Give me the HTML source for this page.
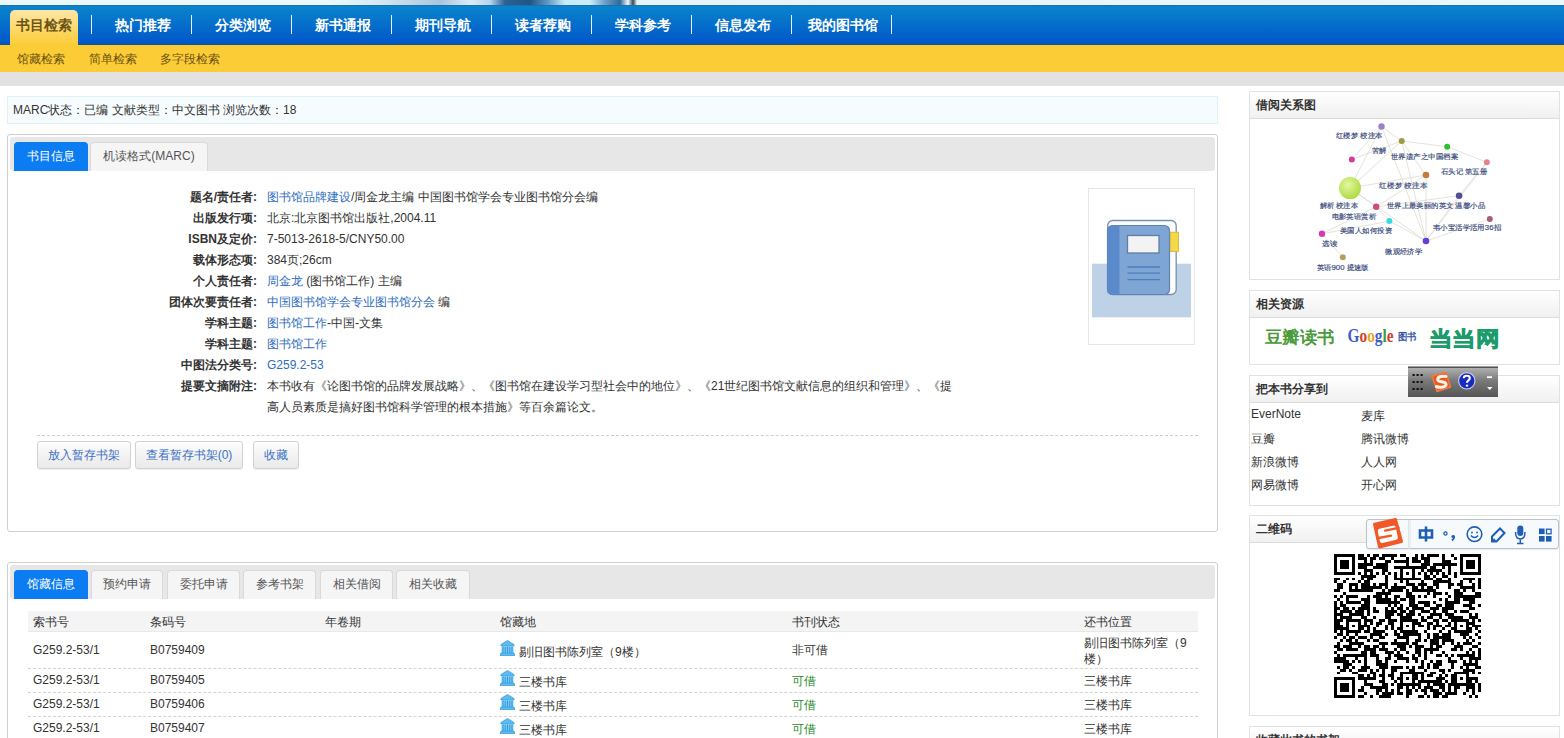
<!DOCTYPE html>
<html><head><meta charset="utf-8">
<style>
*{margin:0;padding:0;box-sizing:border-box}
html,body{width:1564px;height:738px;overflow:hidden;background:#fff;font-family:"Liberation Sans",sans-serif;font-size:12px;color:#333}
.abs{position:absolute}
#banner{left:0;top:0;width:1564px;height:5px;background:linear-gradient(90deg,#eaf8fb 0,#eaf8fb 330px,#d5e8f2 380px,#a9c6dc 440px,#d9ecf6 470px,#b7d6ec 490px,#2a6292 505px,#1f5685 530px,#5f9ac6 548px,#c6ecf8 565px,#c8eef9 590px,#6d9fc6 605px,#2f6a98 620px,#f0f8fc 628px,#3a4a5a 633px,#e6f3f8 637px,#eaf8fb 100%)}
#nav{left:0;top:5px;width:1564px;height:40px;background:linear-gradient(#0a84cc,#0057c9);border-top:1px solid #1a70b0;border-bottom:1px solid #1b4f86}
#nav .it{position:absolute;top:0;height:38px;line-height:38px;color:#fff;font-size:14px;font-weight:bold;white-space:nowrap}
#nav .sep{position:absolute;top:9px;width:1px;height:19px;background:#e8f0ff}
#nav .act{top:4px;left:10px;width:68px;height:35px;line-height:31px;text-align:center;color:#6a5418;background:linear-gradient(#ffe6a6,#fccc36);border-radius:5px 5px 0 0}
#sub{left:0;top:45px;width:1564px;height:27px;background:#fccc36}
#sub span{position:absolute;top:1px;line-height:27px;color:#6a5214;font-size:12px}
#gray{left:0;top:72px;width:1564px;height:14px;background:#e2e2e2}
#marc{left:7px;top:96px;width:1211px;height:28px;background:#f6fcfe;border:1px solid #def3f8;line-height:26px;padding-left:5px;color:#333}
.panel{position:absolute;left:7px;width:1211px;border:1px solid #cfcfcf;border-radius:3px;background:#fff}
.phead{position:absolute;left:2px;top:2px;width:1205px;height:34px;background:#e7e7e7;border-radius:3px}
.tab{position:absolute;top:5px;height:29px;line-height:27px;text-align:center;font-size:12px;color:#555;background:#f5f5f5;border:1px solid #d9d9d9;border-bottom:none;border-radius:4px 4px 0 0}
.tab.on{background:#0b7cf2;color:#fff;border-color:#0b7cf2}
.row{position:absolute;left:0;width:1209px;height:21px;line-height:21px;white-space:nowrap}
.row b{position:absolute;right:960px;font-weight:bold;color:#333}
.row .v{position:absolute;left:259px;color:#333}
a{color:#2f6dbd;text-decoration:none}
.btn{position:absolute;top:306px;height:28px;line-height:26px;text-align:center;color:#3c70c4;border:1px solid #d2d2d2;border-radius:3px;background:linear-gradient(#fdfdfd,#e9e9e9);box-shadow:0 1px 1px rgba(0,0,0,0.07)}
.th{position:absolute;top:0;line-height:20px;color:#333}
.td{position:absolute;color:#333;white-space:nowrap}
.dash{position:absolute;left:20px;width:1170px;height:1px;border-top:1px dashed #d4d4d4}
.lib{display:inline-block;vertical-align:top;margin:0 4px 0 0;position:relative;top:-4px}
.box{position:absolute;left:1249px;width:311px;border:1px solid #e2e2e2;background:#fff}
.bhead{height:27px;line-height:26px;padding-left:6px;font-weight:bold;color:#333;background:linear-gradient(#ffffff,#f0f0f0);border-bottom:1px solid #dcdcdc}
.share{position:absolute;line-height:16px;color:#333}
</style></head><body>
<div id="banner" class="abs"></div>
<div id="nav" class="abs">
 <div class="it act">书目检索</div>
 <div class="sep" style="left:91px"></div>
 <div class="it" style="left:115px">热门推荐</div>
 <div class="sep" style="left:191px"></div>
 <div class="it" style="left:215px">分类浏览</div>
 <div class="sep" style="left:291px"></div>
 <div class="it" style="left:315px">新书通报</div>
 <div class="sep" style="left:391px"></div>
 <div class="it" style="left:415px">期刊导航</div>
 <div class="sep" style="left:491px"></div>
 <div class="it" style="left:515px">读者荐购</div>
 <div class="sep" style="left:591px"></div>
 <div class="it" style="left:615px">学科参考</div>
 <div class="sep" style="left:691px"></div>
 <div class="it" style="left:715px">信息发布</div>
 <div class="sep" style="left:791px"></div>
 <div class="it" style="left:808px">我的图书馆</div>
 <div class="sep" style="left:891px"></div>
</div>
<div id="sub" class="abs">
 <span style="left:17px">馆藏检索</span>
 <span style="left:89px">简单检索</span>
 <span style="left:160px">多字段检索</span>
</div>
<div id="gray" class="abs"></div>
<div id="marc" class="abs">MARC状态：已编 文献类型：中文图书 浏览次数：18</div>

<div class="panel" style="top:134px;height:398px">
 <div class="phead">
  <div class="tab on" style="left:4px;width:74px">书目信息</div>
  <div class="tab" style="left:80px;width:118px">机读格式(MARC)</div>
 </div>
 <div class="row" style="top:52px"><b>题名/责任者:</b><span class="v"><a>图书馆品牌建设</a>/周金龙主编 中国图书馆学会专业图书馆分会编</span></div>
 <div class="row" style="top:73px"><b>出版发行项:</b><span class="v">北京:北京图书馆出版社,2004.11</span></div>
 <div class="row" style="top:94px"><b>ISBN及定价:</b><span class="v">7-5013-2618-5/CNY50.00</span></div>
 <div class="row" style="top:115px"><b>载体形态项:</b><span class="v">384页;26cm</span></div>
 <div class="row" style="top:136px"><b>个人责任者:</b><span class="v"><a>周金龙</a> (图书馆工作) 主编</span></div>
 <div class="row" style="top:157px"><b>团体次要责任者:</b><span class="v"><a>中国图书馆学会专业图书馆分会</a> 编</span></div>
 <div class="row" style="top:178px"><b>学科主题:</b><span class="v"><a>图书馆工作</a>-中国-文集</span></div>
 <div class="row" style="top:199px"><b>学科主题:</b><span class="v"><a>图书馆工作</a></span></div>
 <div class="row" style="top:220px"><b>中图法分类号:</b><span class="v"><a>G259.2-53</a></span></div>
 <div class="row" style="top:241px"><b>提要文摘附注:</b><span class="v">本书收有《论图书馆的品牌发展战略》、《图书馆在建设学习型社会中的地位》、《21世纪图书馆文献信息的组织和管理》、《提</span></div>
 <div class="row" style="top:262px"><span class="v">高人员素质是搞好图书馆科学管理的根本措施》等百余篇论文。</span></div>
 <div class="abs" style="left:29px;top:300px;width:1161px;border-top:1px dashed #cfcfcf"></div>
 <div class="btn" style="left:29px;width:94px">放入暂存书架</div>
 <div class="btn" style="left:127px;width:108px">查看暂存书架(0)</div>
 <div class="btn" style="left:245px;width:46px">收藏</div>
</div>

<div class="panel" style="top:562px;height:200px">
 <div class="phead">
  <div class="tab on" style="left:4px;width:74px">馆藏信息</div>
  <div class="tab" style="left:81px;width:72px">预约申请</div>
  <div class="tab" style="left:157px;width:73px">委托申请</div>
  <div class="tab" style="left:233px;width:73px">参考书架</div>
  <div class="tab" style="left:310px;width:73px">相关借阅</div>
  <div class="tab" style="left:386px;width:74px">相关收藏</div>
 </div>

 <div class="abs" style="left:20px;top:48px;width:1170px;height:21px;background:#f4f4f4;border-bottom:1px solid #e8e8e8"></div>
 <div class="th" style="left:25px;top:49px">索书号</div>
 <div class="th" style="left:142px;top:49px">条码号</div>
 <div class="th" style="left:317px;top:49px">年卷期</div>
 <div class="th" style="left:492px;top:49px">馆藏地</div>
 <div class="th" style="left:784px;top:49px">书刊状态</div>
 <div class="th" style="left:1076px;top:49px">还书位置</div>
 <div class="td" style="left:25px;top:80px">G259.2-53/1</div>
 <div class="td" style="left:142px;top:80px">B0759409</div>
 <div class="td" style="left:492px;top:81px"><svg class="lib" width="15" height="16" viewBox="0 0 15 16"><path d="M7.5 0.5L14 4.5V6H1V4.5Z" fill="#5cbcf2" stroke="#3a9ee0" stroke-width="0.8"/><rect x="1.5" y="6.5" width="12" height="6.5" fill="#7fcdf6"/><path d="M3 6.5V13M5.2 6.5V13M7.5 6.5V13M9.8 6.5V13M12 6.5V13" stroke="#3399dd" stroke-width="1.1"/><path d="M1 13H14L15 15.5H0Z" fill="#5cbcf2" stroke="#3a9ee0" stroke-width="0.8"/></svg>剔旧图书陈列室（9楼）</div>
 <div class="td" style="left:784px;top:79px">非可借</div>
 <div class="td" style="left:1076px;top:72px;line-height:16px">剔旧图书陈列室（9<br>楼）</div>
 <div class="dash" style="top:105px"></div>
 <div class="td" style="left:25px;top:110px">G259.2-53/1</div>
 <div class="td" style="left:142px;top:110px">B0759405</div>
 <div class="td" style="left:492px;top:111px"><svg class="lib" width="15" height="16" viewBox="0 0 15 16"><path d="M7.5 0.5L14 4.5V6H1V4.5Z" fill="#5cbcf2" stroke="#3a9ee0" stroke-width="0.8"/><rect x="1.5" y="6.5" width="12" height="6.5" fill="#7fcdf6"/><path d="M3 6.5V13M5.2 6.5V13M7.5 6.5V13M9.8 6.5V13M12 6.5V13" stroke="#3399dd" stroke-width="1.1"/><path d="M1 13H14L15 15.5H0Z" fill="#5cbcf2" stroke="#3a9ee0" stroke-width="0.8"/></svg>三楼书库</div>
 <div class="td" style="left:784px;top:110px;color:#2b8a2b">可借</div>
 <div class="td" style="left:1076px;top:110px">三楼书库</div>
 <div class="dash" style="top:129px"></div>
 <div class="td" style="left:25px;top:134px">G259.2-53/1</div>
 <div class="td" style="left:142px;top:134px">B0759406</div>
 <div class="td" style="left:492px;top:135px"><svg class="lib" width="15" height="16" viewBox="0 0 15 16"><path d="M7.5 0.5L14 4.5V6H1V4.5Z" fill="#5cbcf2" stroke="#3a9ee0" stroke-width="0.8"/><rect x="1.5" y="6.5" width="12" height="6.5" fill="#7fcdf6"/><path d="M3 6.5V13M5.2 6.5V13M7.5 6.5V13M9.8 6.5V13M12 6.5V13" stroke="#3399dd" stroke-width="1.1"/><path d="M1 13H14L15 15.5H0Z" fill="#5cbcf2" stroke="#3a9ee0" stroke-width="0.8"/></svg>三楼书库</div>
 <div class="td" style="left:784px;top:134px;color:#2b8a2b">可借</div>
 <div class="td" style="left:1076px;top:134px">三楼书库</div>
 <div class="dash" style="top:153px"></div>
 <div class="td" style="left:25px;top:158px">G259.2-53/1</div>
 <div class="td" style="left:142px;top:158px">B0759407</div>
 <div class="td" style="left:492px;top:159px"><svg class="lib" width="15" height="16" viewBox="0 0 15 16"><path d="M7.5 0.5L14 4.5V6H1V4.5Z" fill="#5cbcf2" stroke="#3a9ee0" stroke-width="0.8"/><rect x="1.5" y="6.5" width="12" height="6.5" fill="#7fcdf6"/><path d="M3 6.5V13M5.2 6.5V13M7.5 6.5V13M9.8 6.5V13M12 6.5V13" stroke="#3399dd" stroke-width="1.1"/><path d="M1 13H14L15 15.5H0Z" fill="#5cbcf2" stroke="#3a9ee0" stroke-width="0.8"/></svg>三楼书库</div>
 <div class="td" style="left:784px;top:158px;color:#2b8a2b">可借</div>
 <div class="td" style="left:1076px;top:158px">三楼书库</div>
</div>


<svg class="abs" style="left:1088px;top:188px" width="107" height="157" viewBox="0 0 107 157">
 <rect x="0.5" y="0.5" width="106" height="156" fill="#fff" stroke="#e6e6e6"/>
 <rect x="4" y="75.7" width="99" height="53.6" fill="#bdd1e7"/>
 <rect x="19.7" y="32.5" width="68.5" height="74" rx="5" fill="#fbfcfd" stroke="#7a90aa" stroke-width="1.3"/>
 <rect x="19.5" y="37.5" width="62" height="69" rx="5" fill="#7ea5d4" stroke="#5f84b3" stroke-width="1.2"/>
 <path d="M24.5 37.5H31.4V106.5H24.5A5 5 0 0 1 19.5 101.5V42.5A5 5 0 0 1 24.5 37.5Z" fill="#5a8acb"/>
 <rect x="39.5" y="47.5" width="31.5" height="17.5" fill="#f3f3f3" stroke="#5d7ea6" stroke-width="1.3"/>
 <path d="M39.5 79H72M39.5 85.2H72M39.5 91.6H72" stroke="#4d7ec0" stroke-width="1.3"/>
 <rect x="82.3" y="44.2" width="8.2" height="19.3" fill="#f4d848" stroke="#d0b23a" stroke-width="0.8"/>
</svg>

<div class="box" style="top:91px;height:189px"><div class="bhead">借阅关系图</div></div>
<svg class="abs" style="left:1250px;top:119px" width="309" height="160" viewBox="0 0 309 160">
<defs><radialGradient id="lg" cx="0.4" cy="0.35" r="0.7"><stop offset="0" stop-color="#e4f7a0"/><stop offset="1" stop-color="#a9d93c"/></radialGradient></defs>
<g stroke="#dedbd2" stroke-width="0.8" fill="none">
<line x1="100.0" y1="69.1" x2="131.5" y2="7.5"/>
<line x1="100.0" y1="69.1" x2="151.7" y2="22.0"/>
<line x1="101.8" y1="40.4" x2="151.7" y2="22.0"/>
<line x1="131.5" y1="7.5" x2="151.7" y2="22.0"/>
<line x1="131.5" y1="7.5" x2="176.0" y2="122.0"/>
<line x1="151.7" y1="22.0" x2="176.0" y2="122.0"/>
<line x1="151.7" y1="22.0" x2="197.2" y2="27.7"/>
<line x1="197.2" y1="27.7" x2="236.8" y2="43.3"/>
<line x1="236.8" y1="43.3" x2="209.1" y2="76.7"/>
<line x1="236.8" y1="43.3" x2="176.0" y2="122.0"/>
<line x1="176.0" y1="56.0" x2="176.0" y2="122.0"/>
<line x1="100.0" y1="69.1" x2="176.0" y2="56.0"/>
<line x1="100.0" y1="69.1" x2="126.2" y2="87.8"/>
<line x1="100.0" y1="69.1" x2="176.0" y2="122.0"/>
<line x1="126.2" y1="87.8" x2="139.4" y2="102.1"/>
<line x1="126.2" y1="87.8" x2="176.0" y2="56.0"/>
<line x1="209.1" y1="76.7" x2="176.0" y2="122.0"/>
<line x1="209.1" y1="76.7" x2="126.2" y2="87.8"/>
<line x1="239.8" y1="100.0" x2="176.0" y2="122.0"/>
<line x1="72.0" y1="114.8" x2="126.2" y2="87.8"/>
<line x1="72.0" y1="114.8" x2="139.4" y2="102.1"/>
<line x1="72.0" y1="114.8" x2="92.8" y2="138.2"/>
<line x1="139.4" y1="102.1" x2="176.0" y2="122.0"/>
<line x1="101.8" y1="40.4" x2="131.5" y2="7.5"/>
<line x1="151.7" y1="22.0" x2="176.0" y2="56.0"/>
</g><g font-size="7.4" fill="#3a4a7c" stroke="#3a4a7c" stroke-width="0.18">
<text x="85.8" y="19.1" textLength="46.8" lengthAdjust="spacingAndGlyphs">红楼梦 校注本</text>
<text x="122.0" y="33.7" textLength="14.8" lengthAdjust="spacingAndGlyphs">苦解</text>
<text x="141.0" y="40.0" textLength="67.0" lengthAdjust="spacingAndGlyphs">世界遗产之中国档案</text>
<text x="190.9" y="54.9" textLength="46.3" lengthAdjust="spacingAndGlyphs">石头记 第五册</text>
<text x="129.4" y="68.7" textLength="47.8" lengthAdjust="spacingAndGlyphs">红楼梦 校注本</text>
<text x="69.5" y="88.7" textLength="38.5" lengthAdjust="spacingAndGlyphs">解析 校注本</text>
<text x="136.8" y="88.9" textLength="98.2" lengthAdjust="spacingAndGlyphs">世界上最美丽的英文 温馨小品</text>
<text x="81.6" y="99.9" textLength="44.6" lengthAdjust="spacingAndGlyphs">电影英语赏析</text>
<text x="90.0" y="113.9" textLength="52.0" lengthAdjust="spacingAndGlyphs">美国人如何投资</text>
<text x="183.0" y="111.3" textLength="68.0" lengthAdjust="spacingAndGlyphs">韦小宝活学活用36招</text>
<text x="72.0" y="127.1" textLength="15.0" lengthAdjust="spacingAndGlyphs">选读</text>
<text x="135.3" y="134.7" textLength="37.0" lengthAdjust="spacingAndGlyphs">微观经济学</text>
<text x="66.7" y="150.5" textLength="52.1" lengthAdjust="spacingAndGlyphs">英语900 提速版</text>
</g>
<circle cx="131.5" cy="7.5" r="3.2" fill="#9b80c8"/>
<circle cx="151.7" cy="22.0" r="3.0" fill="#9c9a42"/>
<circle cx="101.8" cy="40.4" r="3.0" fill="#d23c9c"/>
<circle cx="197.2" cy="27.7" r="3.0" fill="#2fc02f"/>
<circle cx="236.8" cy="43.3" r="3.0" fill="#e08392"/>
<circle cx="176.0" cy="56.0" r="3.3" fill="#c27a3a"/>
<circle cx="100.0" cy="69.1" r="11.0" fill="url(#lg)"/>
<circle cx="209.1" cy="76.7" r="3.3" fill="#524f92"/>
<circle cx="126.2" cy="87.8" r="3.2" fill="#c85078"/>
<circle cx="139.4" cy="102.1" r="3.0" fill="#34dbe2"/>
<circle cx="239.8" cy="100.0" r="3.0" fill="#a45f7a"/>
<circle cx="72.0" cy="114.8" r="3.2" fill="#d23ab8"/>
<circle cx="176.0" cy="122.0" r="3.3" fill="#6440d2"/>
<circle cx="92.8" cy="138.2" r="3.0" fill="#b4a062"/>
</svg>
<div class="box" style="top:290px;height:75px"><div class="bhead">相关资源</div></div>
<svg class="abs" style="left:1255px;top:320px" width="260" height="35" viewBox="0 0 260 35">
 <text x="9.8" y="23" font-size="16.5" font-weight="bold" fill="#4b9b3c" textLength="70" lengthAdjust="spacingAndGlyphs">豆瓣读书</text>
 <text x="92.6" y="21.5" font-family="Liberation Serif" font-size="18" font-weight="bold" textLength="46" lengthAdjust="spacingAndGlyphs"><tspan fill="#3b5ec6">G</tspan><tspan fill="#d2402e">o</tspan><tspan fill="#e3a921">o</tspan><tspan fill="#3b5ec6">g</tspan><tspan fill="#3f9a3f">l</tspan><tspan fill="#d2402e">e</tspan></text>
 <text x="142.7" y="20" font-size="9.5" font-weight="bold" fill="#3553a6" textLength="18.7" lengthAdjust="spacingAndGlyphs">图书</text>
 <text x="173.6" y="25.6" font-size="21" font-weight="900" fill="#1c9b6c" stroke="#1c9b6c" stroke-width="0.7" textLength="71" lengthAdjust="spacingAndGlyphs">当当网</text>
</svg>
<div class="box" style="top:375px;height:131px"><div class="bhead">把本书分享到</div></div>
<div class="share" style="left:1251px;top:406px">EverNote</div>
<div class="share" style="left:1361px;top:408px">麦库</div>
<div class="share" style="left:1251px;top:431px">豆瓣</div>
<div class="share" style="left:1361px;top:431px">腾讯微博</div>
<div class="share" style="left:1251px;top:454px">新浪微博</div>
<div class="share" style="left:1361px;top:454px">人人网</div>
<div class="share" style="left:1251px;top:477px">网易微博</div>
<div class="share" style="left:1361px;top:477px">开心网</div>
<svg class="abs" style="left:1408px;top:366px" width="91" height="32" viewBox="0 0 91 32">
 <defs><linearGradient id="tb" x1="0" y1="0" x2="0" y2="1"><stop offset="0" stop-color="#b4b4b4"/><stop offset="0.45" stop-color="#7a7a7a"/><stop offset="1" stop-color="#555"/></linearGradient></defs>
 <rect x="0" y="1" width="90" height="30" fill="url(#tb)"/>
 <rect x="0" y="0.5" width="90" height="1.3" fill="#3c3c3c"/>
 <g fill="#111"><rect x="4.5" y="8" width="2.2" height="2"/><rect x="8.5" y="8" width="2.2" height="2"/><rect x="12.5" y="8" width="2.2" height="2"/><rect x="4.5" y="15" width="2.2" height="2"/><rect x="8.5" y="15" width="2.2" height="2"/><rect x="12.5" y="15" width="2.2" height="2"/><rect x="4.5" y="22" width="2.2" height="2"/><rect x="8.5" y="22" width="2.2" height="2"/><rect x="12.5" y="22" width="2.2" height="2"/></g>
 <path d="M24 10L38 6.5L42.5 21L29 25.5Z" fill="#e85a24" stroke="#f07a3c" stroke-width="1.5" stroke-linejoin="round"/>
 <path d="M38 10.5C34 9.5 28.5 11 29.8 14C31 17 37 14.5 38 18C39 21 32 22 28.5 20.5" stroke="#fff3e8" stroke-width="3" fill="none" stroke-linecap="round"/>
 <circle cx="58.8" cy="14.8" r="8.2" fill="#1a2cc0" stroke="#c8d0f0" stroke-width="1.1"/>
 <path d="M55.8 12.2C55.8 9 61.8 9 61.8 12.2C61.8 14.2 59 14.5 59 16.8" stroke="#fff" stroke-width="2.1" fill="none"/>
 <circle cx="59" cy="19.6" r="1.2" fill="#fff"/>
 <rect x="79" y="10.3" width="5" height="1.8" fill="#fff"/>
 <path d="M79 21H84.5L81.75 24Z" fill="#fff"/>
</svg>
<div class="box" style="top:515px;height:201px"><div class="bhead">二维码</div></div>
<svg class="abs" style="left:1334px;top:554px" width="147" height="144" viewBox="0 0 49 49" preserveAspectRatio="none" shape-rendering="crispEdges"><path d="M0 0h7v1h-7zM8 0h2v1h-2zM11 0h1v1h-1zM13 0h2v1h-2zM16 0h5v1h-5zM22 0h2v1h-2zM27 0h1v1h-1zM29 0h1v1h-1zM31 0h4v1h-4zM36 0h1v1h-1zM39 0h1v1h-1zM42 0h7v1h-7zM0 1h1v1h-1zM6 1h1v1h-1zM8 1h3v1h-3zM12 1h2v1h-2zM15 1h2v1h-2zM19 1h1v1h-1zM24 1h1v1h-1zM26 1h2v1h-2zM29 1h3v1h-3zM36 1h1v1h-1zM40 1h1v1h-1zM42 1h1v1h-1zM48 1h1v1h-1zM0 2h1v1h-1zM2 2h3v1h-3zM6 2h1v1h-1zM10 2h1v1h-1zM12 2h1v1h-1zM17 2h2v1h-2zM20 2h5v1h-5zM26 2h3v1h-3zM30 2h2v1h-2zM36 2h3v1h-3zM42 2h1v1h-1zM44 2h3v1h-3zM48 2h1v1h-1zM0 3h1v1h-1zM2 3h3v1h-3zM6 3h1v1h-1zM8 3h5v1h-5zM14 3h4v1h-4zM24 3h1v1h-1zM29 3h3v1h-3zM33 3h8v1h-8zM42 3h1v1h-1zM44 3h3v1h-3zM48 3h1v1h-1zM0 4h1v1h-1zM2 4h3v1h-3zM6 4h1v1h-1zM8 4h3v1h-3zM13 4h5v1h-5zM20 4h11v1h-11zM32 4h2v1h-2zM36 4h1v1h-1zM38 4h1v1h-1zM42 4h1v1h-1zM44 4h3v1h-3zM48 4h1v1h-1zM0 5h1v1h-1zM6 5h1v1h-1zM10 5h3v1h-3zM16 5h2v1h-2zM22 5h1v1h-1zM26 5h1v1h-1zM29 5h1v1h-1zM31 5h5v1h-5zM38 5h1v1h-1zM42 5h1v1h-1zM48 5h1v1h-1zM0 6h7v1h-7zM8 6h1v1h-1zM10 6h1v1h-1zM12 6h1v1h-1zM14 6h1v1h-1zM16 6h1v1h-1zM18 6h1v1h-1zM20 6h1v1h-1zM22 6h1v1h-1zM24 6h1v1h-1zM26 6h1v1h-1zM28 6h1v1h-1zM30 6h1v1h-1zM32 6h1v1h-1zM34 6h1v1h-1zM36 6h1v1h-1zM38 6h1v1h-1zM40 6h1v1h-1zM42 6h7v1h-7zM9 7h5v1h-5zM17 7h1v1h-1zM20 7h1v1h-1zM22 7h1v1h-1zM26 7h1v1h-1zM30 7h2v1h-2zM33 7h1v1h-1zM36 7h2v1h-2zM40 7h1v1h-1zM0 8h2v1h-2zM4 8h1v1h-1zM6 8h1v1h-1zM9 8h1v1h-1zM11 8h2v1h-2zM17 8h1v1h-1zM20 8h9v1h-9zM30 8h3v1h-3zM34 8h2v1h-2zM38 8h1v1h-1zM43 8h4v1h-4zM48 8h1v1h-1zM0 9h1v1h-1zM3 9h1v1h-1zM8 9h1v1h-1zM10 9h2v1h-2zM17 9h1v1h-1zM22 9h1v1h-1zM24 9h1v1h-1zM29 9h1v1h-1zM33 9h6v1h-6zM42 9h1v1h-1zM45 9h1v1h-1zM48 9h1v1h-1zM1 10h2v1h-2zM5 10h3v1h-3zM9 10h3v1h-3zM13 10h1v1h-1zM15 10h3v1h-3zM20 10h1v1h-1zM24 10h3v1h-3zM28 10h3v1h-3zM33 10h2v1h-2zM38 10h2v1h-2zM41 10h2v1h-2zM46 10h1v1h-1zM48 10h1v1h-1zM1 11h2v1h-2zM5 11h1v1h-1zM7 11h1v1h-1zM9 11h7v1h-7zM17 11h1v1h-1zM19 11h5v1h-5zM26 11h2v1h-2zM29 11h1v1h-1zM31 11h2v1h-2zM34 11h1v1h-1zM38 11h1v1h-1zM42 11h5v1h-5zM48 11h1v1h-1zM0 12h2v1h-2zM5 12h8v1h-8zM16 12h1v1h-1zM18 12h5v1h-5zM24 12h1v1h-1zM26 12h8v1h-8zM40 12h2v1h-2zM43 12h1v1h-1zM46 12h1v1h-1zM3 13h1v1h-1zM14 13h5v1h-5zM24 13h2v1h-2zM31 13h1v1h-1zM33 13h3v1h-3zM37 13h1v1h-1zM40 13h3v1h-3zM47 13h2v1h-2zM0 14h1v1h-1zM2 14h1v1h-1zM4 14h4v1h-4zM11 14h1v1h-1zM13 14h3v1h-3zM17 14h1v1h-1zM20 14h2v1h-2zM24 14h3v1h-3zM28 14h1v1h-1zM30 14h1v1h-1zM33 14h1v1h-1zM38 14h1v1h-1zM40 14h9v1h-9zM1 15h1v1h-1zM4 15h1v1h-1zM9 15h3v1h-3zM14 15h5v1h-5zM20 15h1v1h-1zM22 15h2v1h-2zM25 15h2v1h-2zM35 15h1v1h-1zM37 15h1v1h-1zM40 15h2v1h-2zM43 15h4v1h-4zM0 16h1v1h-1zM2 16h1v1h-1zM4 16h5v1h-5zM10 16h2v1h-2zM14 16h8v1h-8zM25 16h2v1h-2zM28 16h4v1h-4zM33 16h1v1h-1zM37 16h5v1h-5zM45 16h2v1h-2zM0 17h1v1h-1zM2 17h2v1h-2zM9 17h3v1h-3zM18 17h1v1h-1zM20 17h1v1h-1zM22 17h1v1h-1zM25 17h3v1h-3zM30 17h2v1h-2zM34 17h2v1h-2zM37 17h3v1h-3zM43 17h3v1h-3zM48 17h1v1h-1zM0 18h2v1h-2zM3 18h2v1h-2zM6 18h1v1h-1zM8 18h4v1h-4zM13 18h1v1h-1zM17 18h1v1h-1zM19 18h1v1h-1zM21 18h2v1h-2zM24 18h1v1h-1zM26 18h4v1h-4zM32 18h3v1h-3zM36 18h4v1h-4zM45 18h2v1h-2zM0 19h1v1h-1zM2 19h4v1h-4zM7 19h3v1h-3zM11 19h1v1h-1zM13 19h2v1h-2zM17 19h4v1h-4zM22 19h2v1h-2zM25 19h2v1h-2zM29 19h3v1h-3zM33 19h1v1h-1zM36 19h2v1h-2zM40 19h1v1h-1zM42 19h3v1h-3zM0 20h3v1h-3zM5 20h5v1h-5zM11 20h1v1h-1zM17 20h3v1h-3zM21 20h2v1h-2zM24 20h3v1h-3zM28 20h1v1h-1zM32 20h4v1h-4zM37 20h3v1h-3zM45 20h1v1h-1zM47 20h1v1h-1zM0 21h1v1h-1zM2 21h4v1h-4zM9 21h2v1h-2zM13 21h1v1h-1zM17 21h2v1h-2zM22 21h4v1h-4zM29 21h1v1h-1zM31 21h2v1h-2zM35 21h1v1h-1zM38 21h5v1h-5zM45 21h3v1h-3zM0 22h3v1h-3zM4 22h5v1h-5zM10 22h3v1h-3zM15 22h2v1h-2zM18 22h3v1h-3zM22 22h6v1h-6zM29 22h2v1h-2zM33 22h2v1h-2zM36 22h2v1h-2zM39 22h6v1h-6zM46 22h1v1h-1zM48 22h1v1h-1zM0 23h2v1h-2zM4 23h1v1h-1zM8 23h1v1h-1zM10 23h1v1h-1zM12 23h1v1h-1zM14 23h2v1h-2zM18 23h2v1h-2zM22 23h1v1h-1zM26 23h3v1h-3zM31 23h2v1h-2zM34 23h1v1h-1zM38 23h1v1h-1zM40 23h1v1h-1zM44 23h3v1h-3zM0 24h3v1h-3zM4 24h1v1h-1zM6 24h1v1h-1zM8 24h4v1h-4zM14 24h1v1h-1zM17 24h1v1h-1zM19 24h1v1h-1zM22 24h1v1h-1zM24 24h1v1h-1zM26 24h1v1h-1zM28 24h2v1h-2zM31 24h1v1h-1zM33 24h3v1h-3zM37 24h2v1h-2zM40 24h1v1h-1zM42 24h1v1h-1zM44 24h1v1h-1zM46 24h3v1h-3zM0 25h5v1h-5zM8 25h2v1h-2zM11 25h1v1h-1zM13 25h1v1h-1zM17 25h1v1h-1zM19 25h1v1h-1zM21 25h2v1h-2zM26 25h1v1h-1zM31 25h1v1h-1zM33 25h1v1h-1zM36 25h1v1h-1zM39 25h2v1h-2zM44 25h2v1h-2zM47 25h1v1h-1zM0 26h1v1h-1zM2 26h1v1h-1zM4 26h5v1h-5zM10 26h2v1h-2zM13 26h4v1h-4zM20 26h1v1h-1zM22 26h6v1h-6zM30 26h1v1h-1zM35 26h1v1h-1zM38 26h1v1h-1zM40 26h6v1h-6zM48 26h1v1h-1zM1 27h2v1h-2zM4 27h1v1h-1zM7 27h1v1h-1zM12 27h4v1h-4zM17 27h1v1h-1zM20 27h2v1h-2zM23 27h6v1h-6zM31 27h1v1h-1zM33 27h2v1h-2zM36 27h3v1h-3zM42 27h3v1h-3zM47 27h1v1h-1zM0 28h1v1h-1zM3 28h1v1h-1zM5 28h2v1h-2zM8 28h3v1h-3zM12 28h1v1h-1zM15 28h2v1h-2zM21 28h4v1h-4zM28 28h1v1h-1zM31 28h1v1h-1zM33 28h6v1h-6zM43 28h1v1h-1zM45 28h1v1h-1zM48 28h1v1h-1zM2 29h1v1h-1zM4 29h2v1h-2zM7 29h1v1h-1zM11 29h1v1h-1zM13 29h2v1h-2zM20 29h1v1h-1zM24 29h1v1h-1zM27 29h2v1h-2zM30 29h1v1h-1zM32 29h3v1h-3zM36 29h4v1h-4zM44 29h1v1h-1zM46 29h1v1h-1zM1 30h1v1h-1zM5 30h5v1h-5zM15 30h3v1h-3zM19 30h6v1h-6zM26 30h2v1h-2zM32 30h3v1h-3zM36 30h1v1h-1zM39 30h1v1h-1zM41 30h1v1h-1zM43 30h3v1h-3zM48 30h1v1h-1zM0 31h2v1h-2zM3 31h3v1h-3zM8 31h1v1h-1zM10 31h2v1h-2zM13 31h2v1h-2zM16 31h1v1h-1zM21 31h3v1h-3zM25 31h1v1h-1zM27 31h3v1h-3zM32 31h1v1h-1zM34 31h2v1h-2zM40 31h3v1h-3zM46 31h2v1h-2zM1 32h2v1h-2zM4 32h4v1h-4zM10 32h4v1h-4zM15 32h3v1h-3zM20 32h1v1h-1zM22 32h2v1h-2zM27 32h2v1h-2zM30 32h5v1h-5zM39 32h2v1h-2zM42 32h1v1h-1zM45 32h1v1h-1zM48 32h1v1h-1zM0 33h1v1h-1zM9 33h2v1h-2zM12 33h2v1h-2zM17 33h3v1h-3zM21 33h1v1h-1zM24 33h1v1h-1zM27 33h2v1h-2zM30 33h1v1h-1zM32 33h1v1h-1zM36 33h1v1h-1zM44 33h1v1h-1zM46 33h1v1h-1zM48 33h1v1h-1zM1 34h1v1h-1zM3 34h8v1h-8zM12 34h3v1h-3zM18 34h1v1h-1zM20 34h3v1h-3zM26 34h1v1h-1zM28 34h1v1h-1zM30 34h1v1h-1zM34 34h2v1h-2zM37 34h1v1h-1zM39 34h1v1h-1zM41 34h6v1h-6zM48 34h1v1h-1zM0 35h4v1h-4zM7 35h1v1h-1zM10 35h1v1h-1zM14 35h1v1h-1zM17 35h2v1h-2zM21 35h4v1h-4zM26 35h2v1h-2zM30 35h1v1h-1zM38 35h1v1h-1zM42 35h1v1h-1zM45 35h4v1h-4zM0 36h5v1h-5zM6 36h1v1h-1zM8 36h1v1h-1zM10 36h1v1h-1zM14 36h2v1h-2zM17 36h1v1h-1zM20 36h1v1h-1zM24 36h1v1h-1zM27 36h1v1h-1zM29 36h1v1h-1zM32 36h1v1h-1zM34 36h2v1h-2zM38 36h3v1h-3zM43 36h1v1h-1zM45 36h1v1h-1zM47 36h1v1h-1zM3 37h3v1h-3zM10 37h1v1h-1zM14 37h4v1h-4zM29 37h1v1h-1zM31 37h1v1h-1zM33 37h3v1h-3zM39 37h1v1h-1zM43 37h5v1h-5zM1 38h1v1h-1zM3 38h2v1h-2zM6 38h1v1h-1zM9 38h3v1h-3zM15 38h3v1h-3zM19 38h4v1h-4zM24 38h1v1h-1zM26 38h1v1h-1zM28 38h2v1h-2zM31 38h1v1h-1zM33 38h2v1h-2zM39 38h1v1h-1zM42 38h1v1h-1zM44 38h1v1h-1zM47 38h2v1h-2zM2 39h2v1h-2zM5 39h1v1h-1zM8 39h3v1h-3zM12 39h1v1h-1zM14 39h1v1h-1zM16 39h1v1h-1zM19 39h2v1h-2zM25 39h2v1h-2zM30 39h1v1h-1zM35 39h2v1h-2zM38 39h1v1h-1zM43 39h4v1h-4zM1 40h1v1h-1zM6 40h2v1h-2zM12 40h2v1h-2zM16 40h1v1h-1zM19 40h1v1h-1zM22 40h8v1h-8zM32 40h2v1h-2zM36 40h1v1h-1zM40 40h5v1h-5zM46 40h1v1h-1zM48 40h1v1h-1zM8 41h2v1h-2zM11 41h1v1h-1zM13 41h1v1h-1zM15 41h2v1h-2zM18 41h2v1h-2zM22 41h1v1h-1zM26 41h2v1h-2zM29 41h1v1h-1zM31 41h2v1h-2zM35 41h1v1h-1zM37 41h1v1h-1zM39 41h2v1h-2zM44 41h1v1h-1zM0 42h7v1h-7zM8 42h6v1h-6zM16 42h1v1h-1zM19 42h1v1h-1zM21 42h2v1h-2zM24 42h1v1h-1zM26 42h2v1h-2zM29 42h1v1h-1zM34 42h3v1h-3zM39 42h2v1h-2zM42 42h1v1h-1zM44 42h4v1h-4zM0 43h1v1h-1zM6 43h1v1h-1zM10 43h1v1h-1zM15 43h2v1h-2zM20 43h1v1h-1zM22 43h1v1h-1zM26 43h1v1h-1zM28 43h8v1h-8zM37 43h1v1h-1zM39 43h2v1h-2zM44 43h2v1h-2zM47 43h1v1h-1zM0 44h1v1h-1zM2 44h3v1h-3zM6 44h1v1h-1zM10 44h3v1h-3zM16 44h2v1h-2zM19 44h1v1h-1zM21 44h8v1h-8zM31 44h1v1h-1zM33 44h4v1h-4zM38 44h9v1h-9zM48 44h1v1h-1zM0 45h1v1h-1zM2 45h3v1h-3zM6 45h1v1h-1zM9 45h1v1h-1zM12 45h6v1h-6zM21 45h2v1h-2zM24 45h1v1h-1zM26 45h1v1h-1zM28 45h1v1h-1zM30 45h3v1h-3zM35 45h2v1h-2zM38 45h1v1h-1zM40 45h2v1h-2zM44 45h3v1h-3zM48 45h1v1h-1zM0 46h1v1h-1zM2 46h3v1h-3zM6 46h1v1h-1zM8 46h2v1h-2zM14 46h2v1h-2zM17 46h1v1h-1zM19 46h1v1h-1zM21 46h1v1h-1zM24 46h2v1h-2zM27 46h1v1h-1zM29 46h2v1h-2zM32 46h3v1h-3zM36 46h1v1h-1zM38 46h1v1h-1zM40 46h1v1h-1zM44 46h1v1h-1zM46 46h1v1h-1zM48 46h1v1h-1zM0 47h1v1h-1zM6 47h1v1h-1zM10 47h1v1h-1zM14 47h1v1h-1zM16 47h4v1h-4zM21 47h2v1h-2zM24 47h2v1h-2zM30 47h1v1h-1zM33 47h3v1h-3zM37 47h4v1h-4zM43 47h1v1h-1zM46 47h1v1h-1zM0 48h7v1h-7zM8 48h2v1h-2zM12 48h1v1h-1zM15 48h4v1h-4zM24 48h1v1h-1zM28 48h2v1h-2zM31 48h1v1h-1zM33 48h2v1h-2zM36 48h2v1h-2zM45 48h1v1h-1zM47 48h1v1h-1z" fill="#000"/></svg>
<div class="abs" style="left:1366px;top:519px;width:193px;height:30px;border:1px solid #b9c3cf;border-radius:3px;background:#f7fafd;box-shadow:0 1px 1px rgba(0,0,0,0.08)"></div>
<svg class="abs" style="left:1366px;top:517px" width="193" height="33" viewBox="0 0 193 33">
 <path d="M8.5 7.2L29.5 2.5L35.5 24.5L13.5 30Z" fill="#f05a28" stroke="#f05a28" stroke-width="3" stroke-linejoin="round"/>
 <path d="M14 14L27.6 10.8L29.6 20.6L16 23.8Z" fill="#fff" stroke="#fff" stroke-width="4.4" stroke-linejoin="round"/>
 <path d="M19 13.6L32.5 10.8M11.2 21.2L25 18.6" stroke="#f05a28" stroke-width="2.4" stroke-linecap="round"/>
 <path d="M42.5 3V32M44 3V32" stroke="#d8dde3" stroke-width="0.8"/>
 <g fill="#1d5fb4" stroke="#1d5fb4">
  <path d="M54 13.5H66V20.5H54Z" fill="none" stroke-width="2.6"/><path d="M60 9.5V24.5" stroke-width="2.6"/>
  <circle cx="79.5" cy="16.5" r="1.6" fill="none" stroke-width="1.2"/>
  <path d="M87.3 19C88.5 19 88.6 21 86 23.5" stroke-width="1.8" fill="none"/><circle cx="87" cy="19.5" r="1.6" stroke="none"/>
  <circle cx="108.5" cy="17.2" r="7.3" fill="none" stroke-width="1.6"/>
  <circle cx="106" cy="15.5" r="0.9" stroke="none"/><circle cx="111" cy="15.5" r="0.9" stroke="none"/>
  <path d="M104.8 18.5Q108.5 22.5 112.2 18.5" fill="none" stroke-width="1.3"/>
  <path d="M126 24.5V19.5L134 11.5L138.5 16L130.5 24.5Z" fill="none" stroke-width="2"/><path d="M126 24.5L130.5 24.5L128 21Z" stroke="none"/>
  <rect x="151.3" y="8.5" width="6" height="10.5" rx="3" stroke="none"/>
  <path d="M149.5 15Q149.5 22 154.3 22Q159 22 159 15M154.3 22V26M151 26.5H157.5" fill="none" stroke-width="1.5"/>
  <rect x="173" y="11.5" width="5.6" height="5.6" stroke="none"/><rect x="180.5" y="12.2" width="4.6" height="4.6" fill="none" stroke-width="1.3"/>
  <rect x="173" y="19" width="5.6" height="5.6" stroke="none"/><rect x="180" y="19" width="5.6" height="5.6" stroke="none"/>
 </g>
</svg>
<div class="box" style="top:726px;height:40px"><div class="bhead">收藏此书的书架</div></div>
</body></html>
